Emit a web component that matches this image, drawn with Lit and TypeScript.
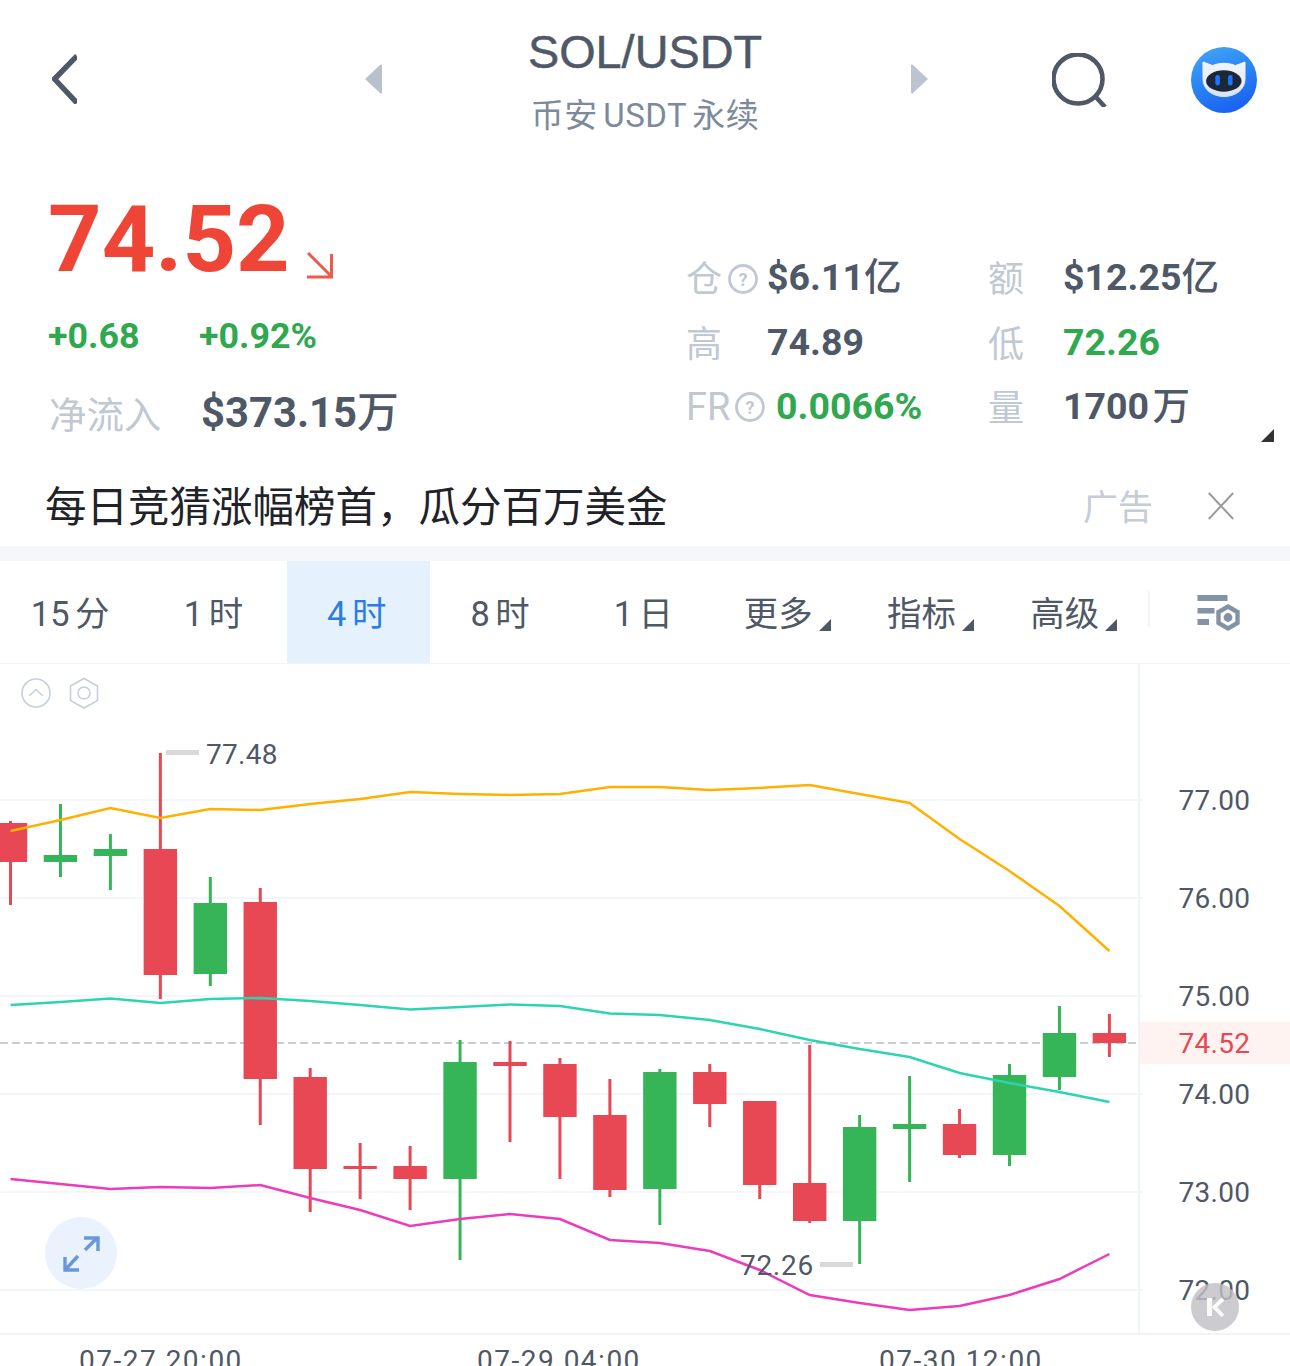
import { LitElement, html, css, svg } from "lit";
import { customElement } from "lit/decorators.js";

const CJK = css`"Noto Sans CJK SC"`;
const RED = "#e84754";
const GREEN = "#36b558";
type C = [number, number, number, number, number];
// wick top, wick bottom, body top, body bottom, 1 = green
const candles: C[] = [
  [821, 905, 823, 862, 0],
  [804, 877, 855, 862, 1],
  [834, 890, 849, 856, 1],
  [753, 999, 849, 975, 0],
  [877, 986, 903, 974, 1],
  [888, 1125, 902, 1079, 0],
  [1068, 1212, 1077, 1169, 0],
  [1143, 1199, 1166, 1169, 0],
  [1146, 1210, 1166, 1179, 0],
  [1040, 1260, 1062, 1179, 1],
  [1041, 1142, 1062, 1066, 0],
  [1058, 1179, 1064, 1117, 0],
  [1079, 1197, 1115, 1190, 0],
  [1069, 1225, 1072, 1189, 1],
  [1064, 1127, 1072, 1104, 0],
  [1101, 1199, 1101, 1185, 0],
  [1045, 1223, 1183, 1221, 0],
  [1115, 1264, 1127, 1221, 1],
  [1076, 1182, 1124, 1129, 1],
  [1109, 1158, 1124, 1155, 0],
  [1064, 1166, 1075, 1155, 1],
  [1006, 1090, 1033, 1077, 1],
  [1014, 1057, 1033, 1043, 0],
];
const orange = [831, 820, 808, 818, 809, 810, 804, 799, 792, 794, 795, 794, 787, 787, 790, 788, 785, 794, 803, 839, 871, 906, 951];
const teal = [1005, 1002, 998.5, 1003, 999, 998, 1001, 1005, 1009.5, 1007, 1004.5, 1006, 1013.5, 1015, 1020, 1029, 1040, 1049, 1057, 1073, 1083, 1092, 1102];
const pink = [1179, 1184, 1189, 1187, 1188, 1185, 1198, 1210, 1226, 1219, 1214, 1219, 1240, 1243, 1251, 1270, 1295, 1303, 1310, 1306, 1295, 1279, 1254];
const cx = (i: number) => 10.5 + i * 49.95;
const pts = (a: number[]) => a.map((y, i) => `${cx(i).toFixed(1)},${y}`).join(" ");

const help = () => html`<svg class="help" viewBox="0 0 30 30"><circle cx="15" cy="15" r="13.5" /><text x="15" y="21.5" text-anchor="middle">?</text></svg>`;

@customElement("app-root")
export class AppRoot extends LitElement {
  static styles = css`
    :host { display: block; width: 1290px; height: 1366px; overflow: hidden; background: #fff; color: #4f5866;
      font-family: Roboto, ${CJK}, sans-serif; }
    .nav { height: 160px; display: grid; grid-template-columns: 383px 1fr 383px; align-items: start; }
    .navl { display: flex; padding-left: 52px; justify-content: space-between; padding-top: 54px; }
    .navl svg.back { width: 25px; height: 50px; }
    .tri { width: 19px; height: 30px; margin-top: 10px; }
    .title { text-align: center; padding-top: 23px; }
    .sym { font: 46.8px/58px "Liberation Sans", sans-serif; color: #4f5866; -webkit-text-stroke: 0.5px #4f5866; }
    .sub { margin-top: 12px; font: 400 33px/46px Roboto, ${CJK}, sans-serif; color: #7c8a9c; word-spacing: -3px; letter-spacing: 0.5px; }
    .navr { display: flex; align-items: flex-start; padding-top: 47px; }
    .navr .tri { margin-top: 17px; margin-left: 3px; }
    .search { width: 56px; height: 54px; margin-left: 123px; margin-top: 6px; flex: none; }
    .bot { width: 66px; height: 66px; margin-left: 83px; flex: none; }

    .quote { height: 305px; display: flex; }
    .left { width: 686px; padding: 21px 0 0 48px; box-sizing: border-box; flex: none; }
    .price { display: flex; align-items: flex-start; height: 116px; }
    .big { font: 700 93.5px/116px Roboto, sans-serif; color: #ef4536; }
    .arrow { width: 28px; height: 28px; margin: 70px 0 0 16px; }
    .chg { display: flex; margin-top: 17px; font: 700 35.8px/44px Roboto, sans-serif; color: #2fa84f; }
    .chg span:first-child { width: 151px; }
    .net { display: flex; align-items: center; margin-top: 30px; }
    .net .lab { width: 153px; font: 400 37.4px/50px ${CJK}, sans-serif; color: #c0c8d3; padding-left: 1px; box-sizing: border-box; }
    .net .val { font: 700 41.8px/50px Roboto, ${CJK}, sans-serif; }
    .unit { font-weight: 500; }
    .grid { flex: 1; position: relative; display: grid; grid-template-columns: 301px 1fr; grid-auto-rows: 64.5px; padding-top: 85px; }
    .cell { display: flex; align-items: center; font: 700 37.5px/44px Roboto, ${CJK}, sans-serif; color: #4f5866; }
    .cell.g { color: #2fa84f; }
    .lab2 { display: flex; align-items: center; color: #c0c8d3; font: 400 36px/44px ${CJK}, sans-serif; width: 81px; margin-top: -2px; flex: none; }
    .c2 .lab2 { width: 76px; padding-left: 1px; box-sizing: border-box; }
    .lab2.fr { font-family: Roboto, sans-serif; font-size: 38px; width: 90px; margin-top: 1px; }
    .help { width: 30px; height: 30px; margin: 5px 0 0 6px; flex: none; }
    .fr .help { margin: 1px 0 0 5px; }
    .help circle { fill: none; stroke: #c0c8d3; stroke-width: 2.8; }
    .help text { font: 700 18px Roboto, sans-serif; fill: #c0c8d3; }
    .tight { word-spacing: -6px; }
    .corner { position: absolute; right: 16px; bottom: 23px; width: 13px; height: 13px; }

    .ad { height: 81px; display: flex; align-items: center; padding: 0 56px 0 45px; }
    .adt { flex: 1; font: 400 41.5px/81px ${CJK}, sans-serif; color: #1f2329; margin-top: -2px; }
    .adl { font: 400 35px/81px ${CJK}, sans-serif; color: #c5ccd6; margin-top: -2px; }
    .x { width: 26px; height: 28px; margin-left: 55px; }
    .sep { height: 15px; background: #f5f7fa; }

    .tabs { height: 102px; display: flex; align-items: stretch; border-bottom: 1px solid #f1f4f9; }
    .tab { width: 143.3px; display: flex; align-items: center; justify-content: center; box-sizing: border-box; padding: 4px 3px 0 0; font: 400 34.4px/1 Roboto, ${CJK}, sans-serif; color: #4f5866; word-spacing: -3px; position: relative; flex: none; }
    .tab.on { background: #e6f1fe; color: #2a7de1; }
    .tab.dd { padding-right: 20px; }
    .tab.dd::after { content: ""; position: absolute; right: 29px; bottom: 32px; width: 0; height: 0; border-left: 12px solid transparent; border-bottom: 12px solid #4f5866; }
    .div { width: 2px; height: 36px; align-self: center; background: #f3f5f8; margin-left: 2px; margin-top: -6px; flex: none; }
    .cfg { width: 44px; height: 38px; margin: 34px 0 0 47px; flex: none; }

    .chart { display: block; width: 1290px; height: 702px; }
    .chart text { font: 400 28px Roboto, sans-serif; fill: #4f5866; letter-spacing: 0.3px; }
    .chart text.red { fill: #e84754; }
    .chart text.time { letter-spacing: 1.5px; }
  `;

  render() {
    return html`
      <div class="nav">
        <div class="navl">
          <svg class="back" viewBox="0 0 25 50"><path d="M25 2 L2.5 25 L25 49" fill="none" stroke="#4f5866" stroke-width="5.4" stroke-linejoin="round"/></svg>
          <svg class="tri" viewBox="0 0 19 30"><path d="M18 1 V29 Q17 30 16 29 L1 15 L16 1 Q17 0 18 1Z" fill="#b8c1cc"/></svg>
        </div>
        <div class="title">
          <div class="sym">SOL/USDT</div>
          <div class="sub">币安 USDT 永续</div>
        </div>
        <div class="navr">
          <svg class="tri" viewBox="0 0 19 30"><path d="M1 1 V29 Q2 30 3 29 L18 15 L3 1 Q2 0 1 1Z" fill="#bcc5cf"/></svg>
          <svg class="search" viewBox="0 0 56 54"><circle cx="26" cy="26" r="24.5" fill="none" stroke="#4f5866" stroke-width="4.6"/><path d="M43 43 L53 54" stroke="#4f5866" stroke-width="4.6"/></svg>
          <svg class="bot" viewBox="0 0 66 66">
            <defs>
              <linearGradient id="bg" x1="0.3" y1="0" x2="0.7" y2="1"><stop offset="0" stop-color="#3ea2f6"/><stop offset="1" stop-color="#165ff0"/></linearGradient>
              <linearGradient id="hd" x1="0" y1="0" x2="0" y2="1"><stop offset="0" stop-color="#f3f6fa"/><stop offset="1" stop-color="#d7e3f2"/></linearGradient>
            </defs>
            <circle cx="33" cy="33" r="33" fill="url(#bg)"/>
            <path d="M12 15 L21.5 18.5 Q33 14 44.5 18.5 L54 15 V32 C54 43 44 49.5 33 49.5 C22 49.5 12 43 12 32Z" fill="url(#hd)" stroke="url(#hd)" stroke-linejoin="round"/>
            <ellipse cx="32.8" cy="34" rx="17.7" ry="10.7" fill="#1d2738"/>
            <rect x="24.3" y="28" width="4.6" height="10.5" rx="2.3" fill="#1677ff"/>
            <rect x="37" y="28" width="4.6" height="10.5" rx="2.3" fill="#1677ff"/>
          </svg>
        </div>
      </div>

      <div class="quote">
        <div class="left">
          <div class="price">
            <span class="big">74.52</span>
            <svg class="arrow" viewBox="0 0 28 28"><path d="M2 2 L25 25 M25.5 3 V26 H1" fill="none" stroke="#f0584c" stroke-width="3"/></svg>
          </div>
          <div class="chg"><span>+0.68</span><span>+0.92%</span></div>
          <div class="net"><span class="lab">净流入</span><span class="val">$373.15<span class="unit">万</span></span></div>
        </div>
        <div class="grid">
          <div class="cell"><span class="lab2">仓${help()}</span><span>$6.11<span class="unit">亿</span></span></div>
          <div class="cell c2"><span class="lab2">额</span><span>$12.25<span class="unit">亿</span></span></div>
          <div class="cell"><span class="lab2">高</span>74.89</div>
          <div class="cell c2 g"><span class="lab2">低</span>72.26</div>
          <div class="cell g"><span class="lab2 fr">FR${help()}</span>0.0066%</div>
          <div class="cell c2"><span class="lab2">量</span><span class="tight">1700 <span class="unit">万</span></span></div>
          <svg class="corner" viewBox="0 0 13 13"><path d="M13 0 V13 H0Z" fill="#333"/></svg>
        </div>
      </div>

      <div class="ad">
        <span class="adt">每日竞猜涨幅榜首，瓜分百万美金</span>
        <span class="adl">广告</span>
        <svg class="x" viewBox="0 0 26 28"><path d="M0.8 1 L25.2 27 M25.2 1 L0.8 27" stroke="#9a9a9a" stroke-width="2"/></svg>
      </div>
      <div class="sep"></div>

      <div class="tabs">
        <div class="tab">15 分</div>
        <div class="tab">1 时</div>
        <div class="tab on">4 时</div>
        <div class="tab">8 时</div>
        <div class="tab">1 日</div>
        <div class="tab dd">更多</div>
        <div class="tab dd">指标</div>
        <div class="tab dd">高级</div>
        <div class="div"></div>
        <svg class="cfg" viewBox="0 0 44 38">
          <g fill="#8492a6"><rect x="0.5" y="0" width="30" height="6"/><rect x="0.5" y="13" width="17" height="5.5"/><rect x="0.5" y="24" width="11.5" height="6"/></g>
          <path d="M31 11.5 L40.5 17 V28 L31 33.5 L21.5 28 V17Z" fill="none" stroke="#8492a6" stroke-width="4.4"/>
          <circle cx="31" cy="22.5" r="4.4" fill="#8492a6"/>
        </svg>
      </div>

      <svg class="chart" viewBox="0 664 1290 702">
        ${[800, 898, 996, 1094, 1192, 1290].map((y) => svg`<rect x="0" y=${y - 1} width="1143" height="2" fill="#f3f6fb"/>`)}
        <rect x="1138" y="664" width="2" height="670" fill="#eff3fb"/>
        <rect x="0" y="1333" width="1290" height="2" fill="#f0f3f9"/>
        <rect x="1140" y="1022" width="150" height="42" fill="#fef3f1"/>
        <line x1="0" x2="1139" y1="1043" y2="1043" stroke="#c9ced6" stroke-width="2" stroke-dasharray="8 4"/>

        ${candles.map(([wt, wb, bt, bb, g], i) => {
          const c = g ? GREEN : RED;
          const x = cx(i);
          return svg`<rect x=${x - 1.5} y=${wt} width="3" height=${wb - wt} fill=${c}/><rect x=${x - 16.7} y=${bt} width="33.4" height=${bb - bt} fill=${c}/>`;
        })}
        <polyline points=${pts(orange)} fill="none" stroke="#ffb000" stroke-width="2.5"/>
        <polyline points=${pts(teal)} fill="none" stroke="#2dd4b0" stroke-width="2.5"/>
        <polyline points=${pts(pink)} fill="none" stroke="#ec3cbc" stroke-width="2.5"/>

        <g fill="none" stroke="#c7cfda" stroke-width="1.6">
          <circle cx="36" cy="693" r="14"/>
          <path d="M29 696 L36 689.5 L43 696"/>
          <path d="M84 678.5 L97.5 686 V700.5 L84 708 L70.5 700.5 V686Z"/>
          <circle cx="84" cy="693" r="6"/>
        </g>

        <rect x="166" y="750" width="33" height="5" fill="#d9d9d9"/>
        <text x="206" y="763.5">77.48</text>
        <text x="740" y="1274.5" style="letter-spacing:0.7px">72.26</text>
        <rect x="820" y="1262" width="33" height="5" fill="#d9d9d9"/>

        ${["77.00", "76.00", "75.00", "74.00", "73.00", "72.00"].map((t, i) => svg`<text x="1178.5" y=${810 + i * 98}>${t}</text>`)}
        <text class="red" x="1178.5" y="1053">74.52</text>
        <text class="time" x="79" y="1370">07-27 20:00</text>
        <text class="time" x="477" y="1370">07-29 04:00</text>
        <text class="time" x="879" y="1370">07-30 12:00</text>

        <circle cx="81" cy="1253" r="36" fill="#e9f2fd"/>
        <g fill="none" stroke="#6a97dc" stroke-width="3.4">
          <path d="M85 1250 L97 1238 M84 1238 H98 V1251"/>
          <path d="M78 1256 L66 1269 M65 1257 V1270 H79"/>
        </g>

        <circle cx="1215" cy="1307" r="24" fill="#bfc0c6" fill-opacity="0.82"/>
        <rect x="1207" y="1298" width="5" height="18" fill="#fff" fill-opacity="0.9"/>
        <path d="M1223 1299 L1214.5 1307 L1223 1316" fill="none" stroke="#fff" stroke-opacity="0.9" stroke-width="4"/>
      </svg>
    `;
  }
}
